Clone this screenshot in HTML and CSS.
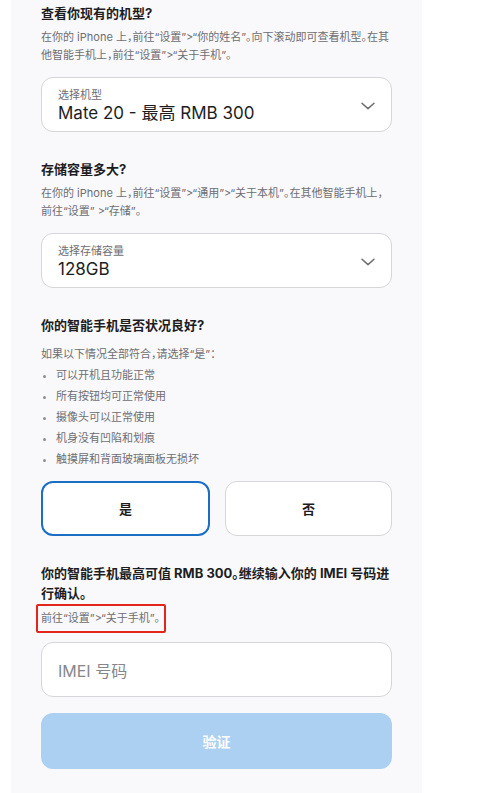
FILE: index.html
```html
<!DOCTYPE html>
<html lang="zh-CN">
<head>
<meta charset="utf-8">
<link rel="stylesheet" href="styles.css">
</head>
<body>
<div class="panel">
  <section class="block">
    <h2 class="q">查看你现有的机型?</h2>
    <p class="desc">在你的 iPhone 上，前往“设置”&gt;“你的姓名”。向下滚动即可查看机型。在其他智能手机上，前往“设置”&gt;“关于手机”。</p>
    <div class="select">
      <div class="sel-text">
        <span class="sel-label">选择机型</span>
        <span class="sel-value">Mate 20 - 最高 RMB 300</span>
      </div>
      <svg class="chev" width="14" height="8" viewBox="0 0 14 8"><path d="M1 1.2 L7 6.6 L13 1.2" fill="none" stroke="#6e6e73" stroke-width="1.5" stroke-linecap="round" stroke-linejoin="round"/></svg>
    </div>
  </section>

  <section class="block">
    <h2 class="q">存储容量多大?</h2>
    <p class="desc">在你的 iPhone 上，前往“设置”&gt;“通用”&gt;“关于本机”。在其他智能手机上，前往“设置” &gt;“存储”。</p>
    <div class="select">
      <div class="sel-text">
        <span class="sel-label">选择存储容量</span>
        <span class="sel-value">128GB</span>
      </div>
      <svg class="chev" width="14" height="8" viewBox="0 0 14 8"><path d="M1 1.2 L7 6.6 L13 1.2" fill="none" stroke="#6e6e73" stroke-width="1.5" stroke-linecap="round" stroke-linejoin="round"/></svg>
    </div>
  </section>

  <section class="block cond">
    <h2 class="q">你的智能手机是否状况良好?</h2>
    <p class="intro">如果以下情况全部符合，请选择“是”：</p>
    <ul class="list">
      <li>可以开机且功能正常</li>
      <li>所有按钮均可正常使用</li>
      <li>摄像头可以正常使用</li>
      <li>机身没有凹陷和划痕</li>
      <li>触摸屏和背面玻璃面板无损坏</li>
    </ul>
    <div class="choices">
      <button class="choice selected">是</button>
      <button class="choice">否</button>
    </div>
  </section>

  <section class="result">
    <p class="result-text">你的智能手机最高可值 RMB 300。继续输入你的 IMEI 号码进行确认。</p>
    <span class="hint">前往“设置”&gt;“关于手机”。</span>
    <div class="input">IMEI 号码</div>
    <button class="verify">验证</button>
  </section>
</div>
</body>
</html>
```

FILE: styles.css
```css
* { box-sizing: border-box; }
html, body { margin: 0; padding: 0; background: #ffffff; }
body {
  font-family: "Inter", "Noto Sans CJK SC", sans-serif;
  font-feature-settings: "halt";
  color: #1d1d1f;
}
.panel {
  width: 411px;
  margin-left: 11px;
  min-height: 793px;
  background: #f9f9fb;
  padding: 4px 30px 24px;
}
.block { margin-bottom: 28px; }
.q {
  margin: 0;
  font-size: 13px;
  line-height: 18px;
  font-weight: 700;
  color: #1d1d1f;
}
.desc {
  margin: 6px 0 0;
  font-size: 11px;
  line-height: 18px;
  color: #6e6e73;
}
.select {
  margin-top: 13px;
  height: 55px;
  background: #ffffff;
  border: 1px solid #d6d6da;
  border-radius: 12px;
  display: flex;
  align-items: center;
  justify-content: space-between;
  padding: 2px 16px 0 16px;
}
.sel-text { display: flex; flex-direction: column; }
.sel-label {
  font-size: 11px;
  line-height: 14px;
  color: #6e6e73;
}
.sel-value {
  font-size: 17px;
  line-height: 22px;
  color: #1d1d1f;
}
.chev { margin-top: 0; }
.cond { margin-bottom: 27px; }
.intro {
  margin: 11px 0 0;
  font-size: 11px;
  line-height: 18px;
  color: #6e6e73;
}
.list {
  margin: 2px 0 0;
  padding: 0 0 0 15px;
  list-style: none;
  font-size: 11px;
  line-height: 21px;
  color: #6e6e73;
}
.list li { position: relative; }
.list li::before {
  content: "";
  position: absolute;
  left: -13px;
  top: 10px;
  width: 3px;
  height: 3px;
  border-radius: 50%;
  background: #8e8e93;
}
.choices {
  margin-top: 11px;
  display: flex;
  gap: 15px;
}
.choice {
  flex: 1;
  height: 55px;
  background: #ffffff;
  border: 1px solid #d6d6da;
  border-radius: 12px;
  font-family: inherit;
  font-size: 13px;
  font-weight: 700;
  color: #1d1d1f;
}
.choice.selected {
  border: 2px solid #1a6fc4;
}
.result-text {
  margin: 0;
  font-size: 13px;
  line-height: 20px;
  font-weight: 700;
  color: #1d1d1f;
}
.hint {
  display: inline-block;
  margin: 1px 0 0 -5px;
  padding: 4px 3px 4px 3px;
  border: 2px solid #e3261c;
  border-radius: 2px;
  font-size: 11px;
  line-height: 17px;
  color: #6e6e73;
  width: 130px;
}
.input {
  margin-top: 9px;
  height: 55px;
  background: #ffffff;
  border: 1px solid #d6d6da;
  border-radius: 12px;
  display: flex;
  align-items: center;
  padding: 0 16px;
  font-size: 16px;
  color: #86868b;
}
.verify {
  display: block;
  width: 100%;
  margin-top: 16px;
  height: 56px;
  border: none;
  border-radius: 12px;
  background: #acd0f2;
  color: #ffffff;
  font-family: inherit;
  font-size: 14px;
  font-weight: 700;
}
```
